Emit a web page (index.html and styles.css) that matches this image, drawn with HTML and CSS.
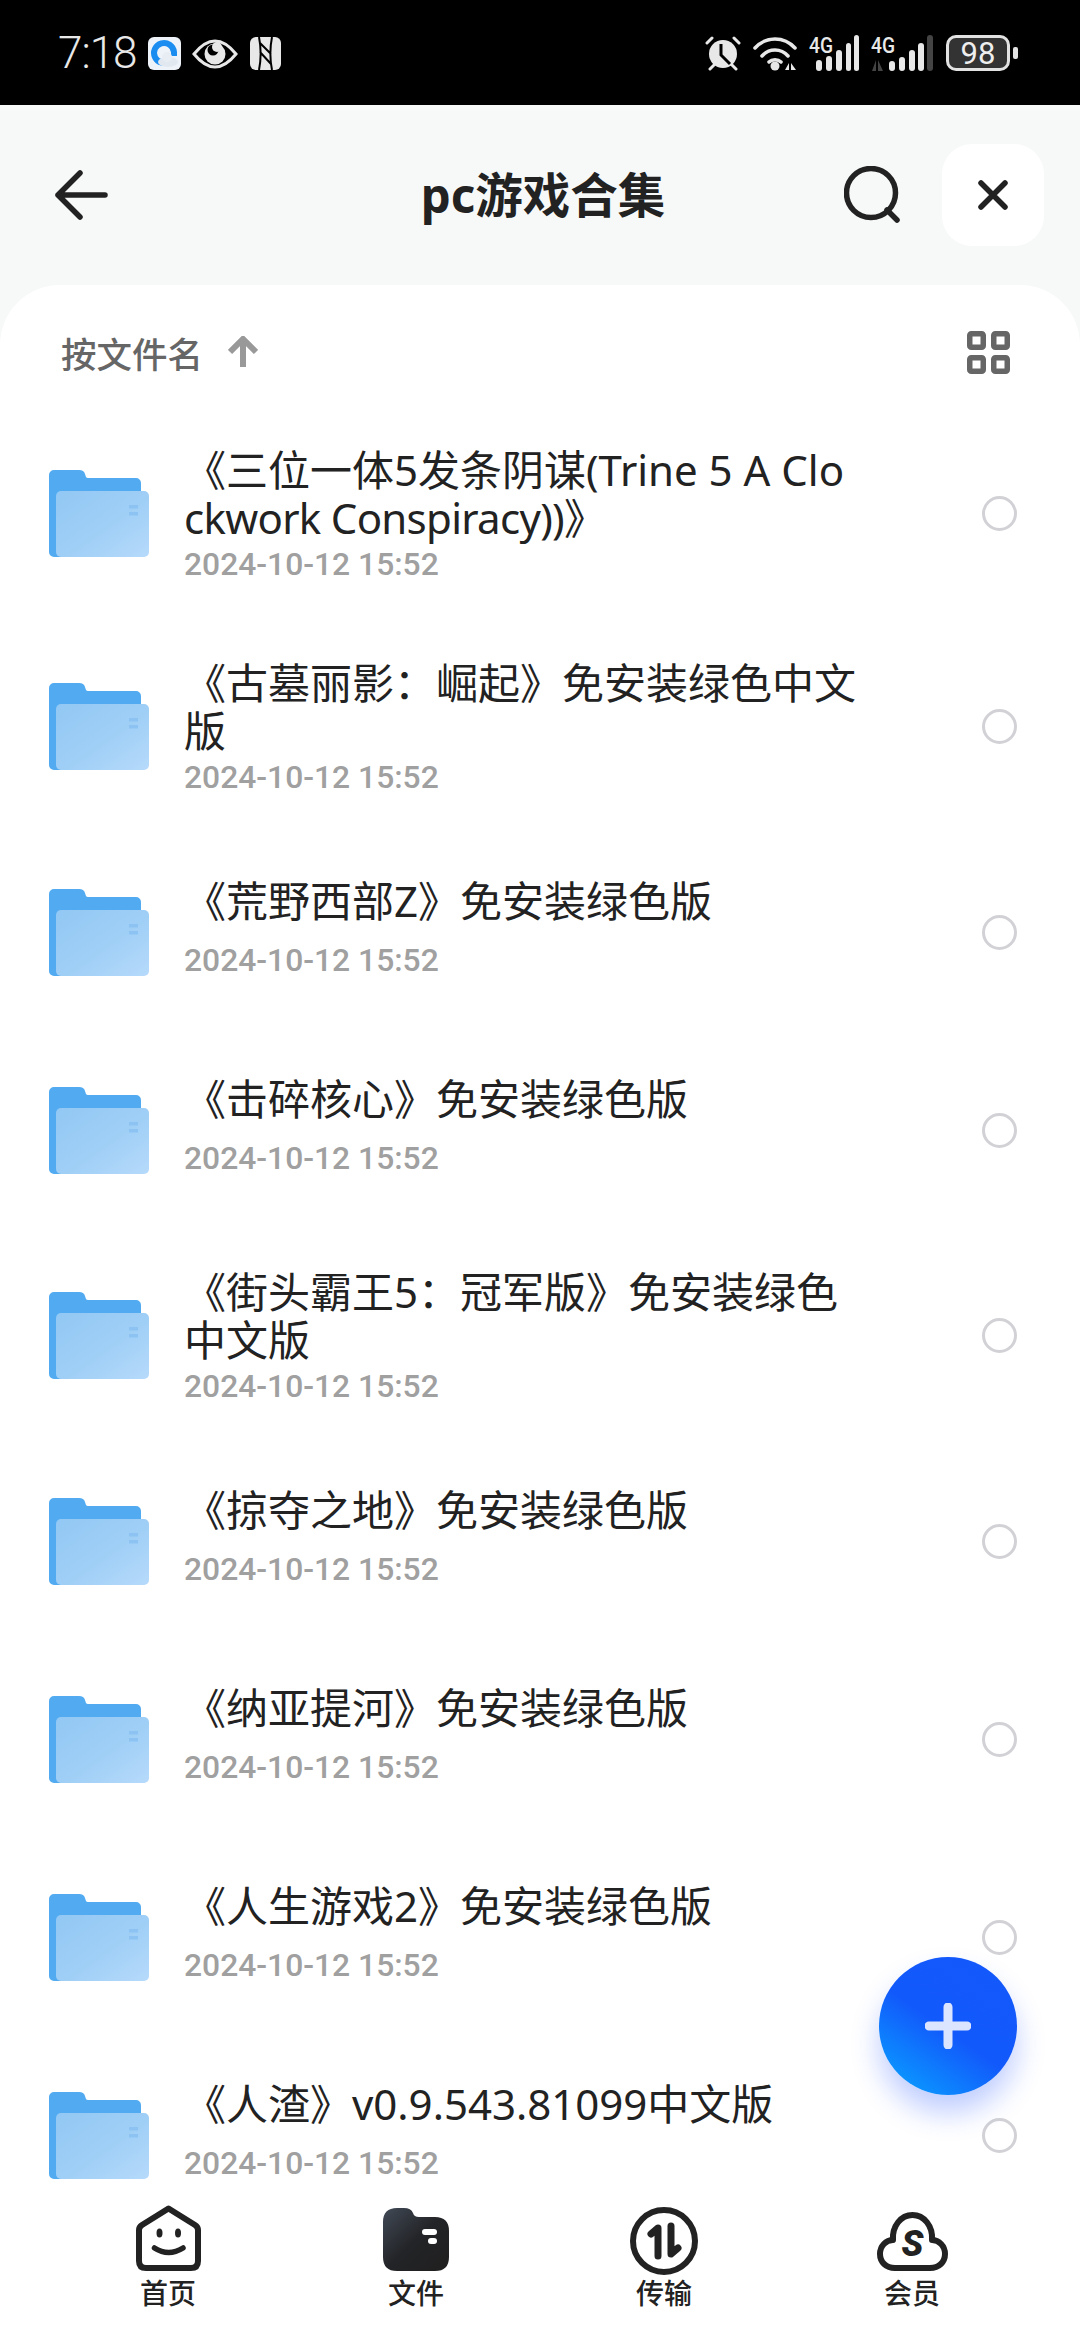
FILE: index.html
```html
<!DOCTYPE html>
<html lang="zh-CN">
<head>
    <meta charset="UTF-8">
    <title>pc游戏合集</title>
    <link rel="stylesheet" href="styles.css">
</head>
<body>
    <!-- 공용 아이콘 -->
    <svg class="defs" aria-hidden="true">
        <defs>
            <linearGradient id="fg" x1="0" y1="0" x2="1" y2="1">
                <stop offset="0" stop-color="#92c8f4"/>
                <stop offset=".55" stop-color="#a0cff6"/>
                <stop offset="1" stop-color="#b6dafb"/>
            </linearGradient>
            <linearGradient id="navf" x1="0" y1="0" x2="1" y2="1">
                <stop offset="0" stop-color="#414a57"/>
                <stop offset=".5" stop-color="#232427"/>
                <stop offset="1" stop-color="#1f1f1f"/>
            </linearGradient>
            <symbol id="folder" viewBox="0 0 100 87">
                <path d="M0 5a5 5 0 0 1 5-5H30q5 0 6 4l1 3q.6 1 2 1H87a5 5 0 0 1 5 5V40H14V87H5a5 5 0 0 1-5-5Z" fill="#52abf1"/>
                <rect x="7" y="21" width="93" height="66" rx="5" fill="url(#fg)"/>
                <rect x="80" y="35" width="9" height="3.5" fill="#8cc3f2"/>
                <rect x="80" y="42" width="9" height="3.5" fill="#8cc3f2"/>
            </symbol>
        </defs>
    </svg>

    <!-- 상태바 -->
    <div class="status">
        <div class="st-left">
            <span class="clock">7:18</span>
            <svg class="ic-app" viewBox="0 0 33 33">
                <rect width="33" height="33" rx="6" fill="#eef3fa"/>
                <path d="M22 24A10 10 0 1 1 26 15V19" fill="none" stroke="#1b8df0" stroke-width="6"/>
                <ellipse cx="20" cy="25" rx="10" ry="5" fill="#e2e8f0"/>
                <circle cx="19" cy="20" r="5" fill="#e8edf4"/>
            </svg>
            <svg class="ic-eye" viewBox="0 0 46 32">
                <path d="M2 16Q23-10 44 16Q23 42 2 16Z" fill="none" stroke="#e8e8e8" stroke-width="3"/>
                <circle cx="23" cy="16" r="10.5" fill="#e8e8e8"/>
                <circle cx="21" cy="12" r="5.5" fill="#000"/>
                <circle cx="25" cy="9" r="5" fill="#e8e8e8"/>
            </svg>
            <svg class="ic-nfc" viewBox="0 0 31 33">
                <rect width="31" height="33" rx="6" fill="#e8e8e8"/>
                <path d="M9 0C11 10 11 23 9 33M22 0C20 10 20 23 22 33M10 6L21 17M10 15L21 27" fill="none" stroke="#000" stroke-width="2"/>
            </svg>
        </div>
        <div class="st-right">
            <svg class="ic-alarm" viewBox="0 0 36 36">
                <circle cx="18" cy="19" r="14" fill="#e8e8e8"/>
                <path d="M16 9V20L25 29" fill="none" stroke="#000" stroke-width="3"/>
                <path d="M2 8L7 3M34 8L29 3M5 34L9 30M31 34L27 30" stroke="#e8e8e8" stroke-width="3" stroke-linecap="round"/>
            </svg>
            <svg class="ic-wifi" viewBox="0 0 44 36">
                <path d="M2 13C13 1 31 1 42 13M9 21C16 13 28 13 35 21M16 27C19 24 25 24 28 27" fill="none" stroke="#e8e8e8" stroke-width="3.5" stroke-linecap="round"/>
                <circle cx="22" cy="31" r="4.5" fill="#e8e8e8"/>
                <path d="M36 28V35H32ZM38 28V35H43Z" fill="#e8e8e8"/>
            </svg>
            <svg class="ic-sig" viewBox="0 -6 50 42">
                <text x="0" y="18" class="sig-txt" textLength="24" lengthAdjust="spacingAndGlyphs">4G</text>
                <rect x="7" y="25" width="6" height="11" rx="3" fill="#e8e8e8"/>
                <rect x="17" y="21" width="6" height="15" rx="3" fill="#e8e8e8"/>
                <rect x="27" y="15" width="6" height="21" rx="3" fill="#e8e8e8"/>
                <rect x="37" y="8" width="5" height="28" rx="2.5" fill="#e8e8e8"/>
                <rect x="45" y="0" width="5" height="36" rx="2.5" fill="#e8e8e8"/>
            </svg>
            <svg class="ic-sig2" viewBox="0 -6 62 42">
                <text x="0" y="18" class="sig-txt" textLength="24" lengthAdjust="spacingAndGlyphs">4G</text>
                <path d="M5 25V36H1ZM7 25V36H12Z" fill="#444"/>
                <rect x="18" y="26" width="6" height="10" rx="3" fill="#e8e8e8"/>
                <rect x="28" y="22" width="6" height="14" rx="3" fill="#e8e8e8"/>
                <rect x="38" y="15" width="6" height="21" rx="3" fill="#e8e8e8"/>
                <rect x="47" y="8" width="6" height="28" rx="3" fill="#e8e8e8"/>
                <rect x="56" y="0" width="6" height="36" rx="3" fill="#444"/>
            </svg>
            <div class="batt"><span>98</span></div>
            <i class="nub"></i>
        </div>
    </div>

    <!-- 상단 -->
    <header class="top">
        <div class="top-l">
            <svg class="ic-back" viewBox="0 0 54 50">
                <path d="M51 25H4M26 3L4 25L26 47" fill="none" stroke="#222" stroke-width="5.5" stroke-linecap="round" stroke-linejoin="round"/>
            </svg>
        </div>
        <h1 class="tit">pc游戏合集</h1>
        <div class="top-r">
            <svg class="ic-search" viewBox="0 0 56 58">
                <circle cx="27" cy="27" r="24.500" fill="none" stroke="#222" stroke-width="5.5"/>
                <path d="M43 44L53 54" stroke="#222" stroke-width="5.5" stroke-linecap="round"/>
            </svg>
            <div class="closebtn">
                <svg class="ic-x" viewBox="0 0 30 30">
                    <path d="M3 3L27 27M27 3L3 27" stroke="#222" stroke-width="5.500" stroke-linecap="round"/>
                </svg>
            </div>
        </div>
    </header>

    <!-- 목록 -->
    <main class="card">
        <div class="sortbar">
            <span class="sort">按文件名</span>
            <svg class="ic-up" viewBox="0 0 30 32">
                <path d="M15 31V4M2 16L15 3L28 16" fill="none" stroke="#999" stroke-width="6"/>
            </svg>
            <svg class="ic-grid" viewBox="0 0 43 43">
                <g fill="none" stroke="#666" stroke-width="5.500">
                    <rect x="2.750" y="2.750" width="13.500" height="13.500" rx="1.500"/>
                    <rect x="26.750" y="2.750" width="13.500" height="13.500" rx="1.500"/>
                    <rect x="2.750" y="26.750" width="13.500" height="13.500" rx="1.500"/>
                    <rect x="26.750" y="26.750" width="13.500" height="13.500" rx="1.500"/>
                </g>
            </svg>
        </div>
        <ul class="list">
            <li class="row two">
                <svg class="folder"><use href="#folder"/></svg>
                <div class="info">
                    <p class="name">《三位一体5发条阴谋(Trine 5 A Clo<br><span class="tight">ckwork Conspiracy))》</span></p>
                    <p class="date">2024-10-12 15:52</p>
                </div>
                <i class="radio"></i>
            </li>
            <li class="row two">
                <svg class="folder"><use href="#folder"/></svg>
                <div class="info">
                    <p class="name">《古墓丽影：崛起》免安装绿色中文<br>版</p>
                    <p class="date">2024-10-12 15:52</p>
                </div>
                <i class="radio"></i>
            </li>
            <li class="row">
                <svg class="folder"><use href="#folder"/></svg>
                <div class="info">
                    <p class="name">《荒野西部Z》免安装绿色版</p>
                    <p class="date">2024-10-12 15:52</p>
                </div>
                <i class="radio"></i>
            </li>
            <li class="row">
                <svg class="folder"><use href="#folder"/></svg>
                <div class="info">
                    <p class="name">《击碎核心》免安装绿色版</p>
                    <p class="date">2024-10-12 15:52</p>
                </div>
                <i class="radio"></i>
            </li>
            <li class="row two">
                <svg class="folder"><use href="#folder"/></svg>
                <div class="info">
                    <p class="name">《街头霸王5：冠军版》免安装绿色<br>中文版</p>
                    <p class="date">2024-10-12 15:52</p>
                </div>
                <i class="radio"></i>
            </li>
            <li class="row">
                <svg class="folder"><use href="#folder"/></svg>
                <div class="info">
                    <p class="name">《掠夺之地》免安装绿色版</p>
                    <p class="date">2024-10-12 15:52</p>
                </div>
                <i class="radio"></i>
            </li>
            <li class="row">
                <svg class="folder"><use href="#folder"/></svg>
                <div class="info">
                    <p class="name">《纳亚提河》免安装绿色版</p>
                    <p class="date">2024-10-12 15:52</p>
                </div>
                <i class="radio"></i>
            </li>
            <li class="row">
                <svg class="folder"><use href="#folder"/></svg>
                <div class="info">
                    <p class="name">《人生游戏2》免安装绿色版</p>
                    <p class="date">2024-10-12 15:52</p>
                </div>
                <i class="radio"></i>
            </li>
            <li class="row">
                <svg class="folder"><use href="#folder"/></svg>
                <div class="info">
                    <p class="name">《人渣》v0.9.543.81099中文版</p>
                    <p class="date">2024-10-12 15:52</p>
                </div>
                <i class="radio"></i>
            </li>
        </ul>
    </main>

    <!-- 추가 버튼 -->
    <div class="fab">
        <svg class="ic-plus" viewBox="0 0 46 46">
            <path d="M23 4V42M4 23H42" stroke="#dbe5ff" stroke-width="9" stroke-linecap="round"/>
        </svg>
    </div>

    <!-- 하단 탭 -->
    <nav class="tabs">
        <div class="tab">
            <div class="tab-ic">
                <svg class="ic-home" viewBox="0 0 65 66">
                    <path d="M32.500 3.500L59 20Q62 22 62 25V56Q62 63 55 63H10Q3 63 3 56V25Q3 22 6 20Z" fill="none" stroke="#222" stroke-width="6" stroke-linejoin="round"/>
                    <ellipse cx="23.500" cy="28" rx="3" ry="4.500" fill="#222"/>
                    <ellipse cx="42" cy="28" rx="3" ry="4.500" fill="#222"/>
                    <path d="M18.500 43Q32.500 52 47 43" fill="none" stroke="#222" stroke-width="5.500" stroke-linecap="round"/>
                </svg>
            </div>
            <span>首页</span>
        </div>
        <div class="tab">
            <div class="tab-ic">
                <svg class="ic-files" viewBox="0 0 66 63">
                    <path d="M0 14Q0 0 14 0H21Q28 0 30 5Q31 9 36 9H52Q66 9 66 23V49Q66 63 52 63H14Q0 63 0 49Z" fill="url(#navf)"/>
                    <rect x="39" y="21" width="15" height="6" rx="3" fill="#fff"/>
                    <rect x="45" y="30" width="9" height="6" rx="3" fill="#fff"/>
                </svg>
            </div>
            <span>文件</span>
        </div>
        <div class="tab">
            <div class="tab-ic">
                <svg class="ic-trans" viewBox="0 0 68 68">
                    <circle cx="34" cy="34" r="31" fill="none" stroke="#222" stroke-width="6"/>
                    <path d="M28 49V21L21 27M41 19V47L48 41" fill="none" stroke="#222" stroke-width="7" stroke-linecap="round" stroke-linejoin="round"/>
                </svg>
            </div>
            <span>传输</span>
        </div>
        <div class="tab">
            <div class="tab-ic">
                <svg class="ic-vip" viewBox="0 0 71 59">
                    <path d="M18 56H53C62 56 68 50 68 42C68 34 62 28 55 28C56 14 47 3 35.500 3C24 3 15 14 16 28C9 28 3 34 3 42C3 50 9 56 18 56Z" fill="none" stroke="#222" stroke-width="6" stroke-linejoin="round"/>
                    <text x="35.500" y="44" class="vip-s">S</text>
                </svg>
            </div>
            <span>会员</span>
        </div>
    </nav>
</body>
</html>
```

FILE: styles.css
```css
html,
body {
    margin: 0;
    padding: 0;
    width: 1080px;
    height: 2340px;
    overflow: hidden;
}

body {
    position: relative;
    display: flex;
    flex-direction: column;
    background: #f7f8f8;
    color: #222;
    font-family: "Noto Sans", "Noto Sans CJK SC", sans-serif;
}

p,
h1,
ul {
    margin: 0;
    padding: 0;
}

svg {
    display: block;
    flex: none;
}

.defs {
    width: 0;
    height: 0;
}

/* 1. 상태바 */
.status {
    flex: none;
    display: flex;
    justify-content: space-between;
    align-items: flex-start;
    height: 105px;
    padding: 37px 62px 0 58px;
    box-sizing: border-box;
    background: #000;
}

.st-left {
    display: flex;
    align-items: center;
    height: 33px;
}

.st-right {
    display: flex;
    align-items: flex-end;
    height: 42px;
    margin-top: -8px;
}

.clock {
    width: 78px;
    margin-right: 12px;
    color: #e8e8e8;
    font-family: Roboto, sans-serif;
    font-size: 44px;
    font-weight: 300;
    line-height: 33px;
    letter-spacing: -1px;
}

.ic-app {
    width: 33px;
    height: 33px;
    margin-right: 11px;
}

.ic-eye {
    width: 46px;
    height: 32px;
    margin-right: 12px;
}

.ic-nfc {
    width: 31px;
    height: 33px;
}

.ic-alarm {
    width: 36px;
    height: 36px;
    margin-right: 12px;
}

.ic-wifi {
    width: 44px;
    height: 36px;
    margin-right: 12px;
}

.ic-sig {
    width: 50px;
    height: 42px;
    margin-right: 12px;
}

.ic-sig2 {
    width: 62px;
    height: 42px;
    margin-right: 13px;
}

.sig-txt {
    fill: #e8e8e8;
    font-family: Roboto, sans-serif;
    font-size: 22px;
    font-weight: 500;
}

.batt {
    display: flex;
    justify-content: center;
    align-items: center;
    width: 64px;
    height: 36px;
    box-sizing: border-box;
    border: 3px solid #e2e2e2;
    border-radius: 10px;
    background: #333;
    color: #eee;
    font-family: Roboto, sans-serif;
    font-size: 31px;
    line-height: 1;
}

.nub {
    width: 5px;
    height: 12px;
    margin: 0 0 12px 3px;
    border-radius: 2px;
    background: #e2e2e2;
}

/* 2. 상단 */
.top {
    flex: none;
    display: grid;
    grid-template-columns: 1fr auto 1fr;
    align-items: center;
    height: 180px;
}

.top-l {
    padding-left: 54px;
}

.ic-back {
    width: 54px;
    height: 50px;
}

.tit {
    padding-left: 6px;
    font-size: 47.500px;
    font-weight: 700;
    line-height: 60px;
}

.top-r {
    display: flex;
    justify-content: flex-end;
    align-items: center;
    gap: 42px;
    padding-right: 36px;
}

.ic-search {
    width: 56px;
    height: 58px;
}

.closebtn {
    display: flex;
    justify-content: center;
    align-items: center;
    width: 102px;
    height: 102px;
    border-radius: 30px;
    background: #fff;
}

.ic-x {
    width: 30px;
    height: 30px;
}

/* 3. 목록 카드 */
.card {
    flex: 1;
    min-height: 0;
    overflow: hidden;
    border-radius: 60px 60px 0 0;
    background: #fff;
}

.sortbar {
    display: flex;
    align-items: center;
    height: 122px;
    padding: 12px 70px 0 61px;
    box-sizing: border-box;
}

.sort {
    color: #666;
    font-size: 35.500px;
    font-weight: 500;
}

.ic-up {
    width: 30px;
    height: 32px;
    margin-left: 25px;
}

.ic-grid {
    width: 43px;
    height: 43px;
    margin-left: auto;
}

.list {
    list-style: none;
}

.row {
    display: flex;
    align-items: center;
    height: 198px;
    padding: 0 63px 0 49px;
}

.row.two {
    height: 213px;
}

.folder {
    width: 100px;
    height: 87px;
    margin-right: 35px;
}

.info {
    flex: 1;
    min-width: 0;
    padding-bottom: 12px;
}

.two .info {
    padding-bottom: 3px;
}

.name {
    font-size: 42px;
    line-height: 48px;
    white-space: nowrap;
}

.tight {
    letter-spacing: -.7px;
}

.date {
    margin-top: 20px;
    color: #a0a0a0;
    font-family: Roboto, sans-serif;
    font-size: 31.800px;
    font-weight: 500;
    line-height: 30px;
}

.two .date {
    margin-top: 7px;
}

.radio {
    flex: none;
    width: 35px;
    height: 35px;
    box-sizing: border-box;
    border: 3.5px solid #d2d2d6;
    border-radius: 50%;
}

/* 4. 추가 버튼 */
.fab {
    position: absolute;
    top: 1957px;
    left: 879px;
    display: flex;
    justify-content: center;
    align-items: center;
    width: 138px;
    height: 138px;
    border-radius: 50%;
    background: linear-gradient(35deg, #0a9bff 8%, #1259fb 48%, #1358fb 100%);
    box-shadow: 0 18px 28px rgba(30, 80, 255, .28);
}

.ic-plus {
    width: 46px;
    height: 46px;
}

/* 5. 하단 탭 */
.tabs {
    flex: none;
    display: grid;
    grid-template-columns: repeat(4, 248px);
    height: 158px;
    padding: 23px 44px 0;
    box-sizing: border-box;
    background: #fff;
}

.tab {
    display: flex;
    flex-direction: column;
    align-items: center;
    font-size: 28px;
    font-weight: 500;
    line-height: 36px;
}

.tab-ic {
    display: flex;
    align-items: flex-end;
    height: 70px;
}

.ic-home {
    width: 65px;
    height: 66px;
    margin-bottom: 4px;
}

.ic-files {
    width: 66px;
    height: 63px;
    margin-bottom: 4px;
}

.ic-trans {
    width: 68px;
    height: 68px;
}

.ic-vip {
    width: 71px;
    height: 59px;
    margin-bottom: 4px;
}

.vip-s {
    fill: #222;
    font-family: Roboto, sans-serif;
    font-size: 36px;
    font-style: italic;
    font-weight: 900;
    text-anchor: middle;
}
```
